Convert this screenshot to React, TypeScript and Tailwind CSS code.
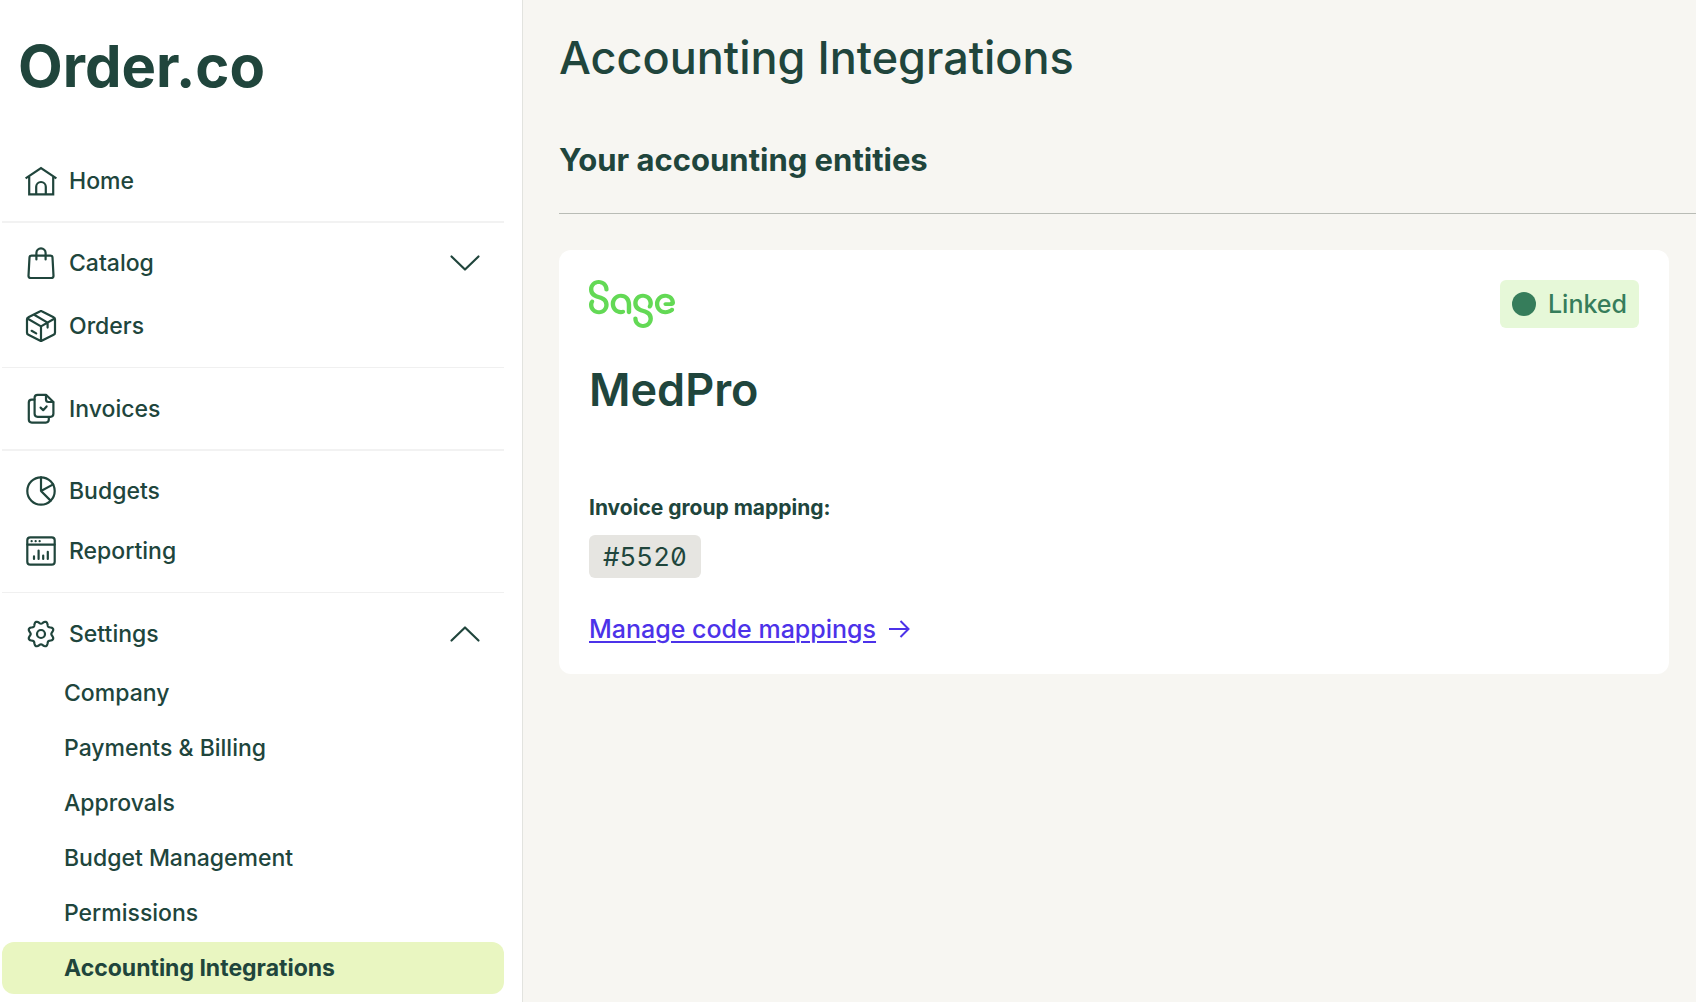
import { useState } from "react";
import type { ReactNode } from "react";
import { SiSage } from "react-icons/si";

const gearPoints = Array.from({ length: 96 }, (_, i) => {
  const a = (i / 96) * Math.PI * 2;
  const r = 11.7 - 1.4 * Math.cos(8 * a);
  return `${(16 + r * Math.cos(a)).toFixed(2)},${(16 + r * Math.sin(a)).toFixed(2)}`;
}).join(" ");

function Icon({ children }: { children: ReactNode }) {
  return (
    <svg
      viewBox="0 0 32 32"
      className="size-8 shrink-0"
      fill="none"
      stroke="currentColor"
      strokeWidth="2.2"
      strokeLinecap="round"
      strokeLinejoin="round"
      aria-hidden="true"
    >
      {children}
    </svg>
  );
}

const icons = {
  home: (
    <Icon>
      <path strokeLinecap="butt" strokeLinejoin="miter" d="M.6 13.4 16 3l15.4 10.4M4.2 11v18.4h24V11" />
      <path d="M11.2 29v-7.2a4.8 4.8 0 0 1 9.6 0V29" />
    </Icon>
  ),
  catalog: (
    <Icon>
      <path d="M6.5 8.6h19a2 2 0 0 1 2 1.9l1 18.4a2 2 0 0 1-2 2.1h-21a2 2 0 0 1-2-2.1l1-18.4a2 2 0 0 1 2-1.9Z" />
      <path d="M11.4 12.5V6a4.6 4.6 0 0 1 9.2 0v6.5" />
    </Icon>
  ),
  orders: (
    <Icon>
      <path d="M17.2 1.4 28.6 7.2a2.4 2.4 0 0 1 1.4 2.2v13.2a2.4 2.4 0 0 1-1.4 2.2l-11.4 5.8a2.4 2.4 0 0 1-2.4 0L3.4 24.8A2.4 2.4 0 0 1 2 22.6V9.4a2.4 2.4 0 0 1 1.4-2.2l11.4-5.8a2.4 2.4 0 0 1 2.4 0Z" />
      <path d="M2.8 8.8 16 16.4l13.2-7.6M16 16.4v14M9.6 5l13 7.6v5M6.6 20.8l4.6 2.6" />
    </Icon>
  ),
  invoices: (
    <Icon>
      <path d="M21 1.8h-8.400a3 3 0 0 0-3 3v16a3 3 0 0 0 3 3h12.800a3 3 0 0 0 3-3V9L21 1.800Z" />
      <path d="M21 2v4.6A2.4 2.4 0 0 0 23.4 9h4.8" />
      <path d="M9.4 6.6H6.8a3 3 0 0 0-3 3v17a3 3 0 0 0 3 3h14a3 3 0 0 0 3-3V24" />
      <path d="m15.6 14.6 2.6 2.6 3.4-3.8" />
    </Icon>
  ),
  budgets: (
    <Icon>
      <circle cx="16" cy="16" r="13.7" />
      <path d="M16 2.4V16l12.2-6.6M16 16l9.6 9.6" />
    </Icon>
  ),
  reporting: (
    <Icon>
      <rect x="2.3" y="2.3" width="27.4" height="27.4" rx="3" />
      <path d="M2.4 9.6h27.2M9 24v-2.6M13.6 24v-8.4M18.2 24v-3.4M22.8 24v-7.2" />
      <path d="M6.6 6.2h.1M10.6 6.2h.1M14.6 6.2h.1" />
    </Icon>
  ),
  settings: (
    <Icon>
      <polygon points={gearPoints} />
      <circle cx="16" cy="16" r="4" />
    </Icon>
  ),
};

function Chevron({ up }: { up?: boolean }) {
  return (
    <Icon>
      <path d={up ? "M2.5 22.5 16 9.5l13.5 13" : "m2.5 9.5 13.5 13 13.5-13"} />
    </Icon>
  );
}

function NavLink({ icon, label }: { icon: ReactNode; label: string }) {
  return (
    <a href="#" className="flex h-14 items-center gap-3 pl-[23px]">
      {icon}
      <span>{label}</span>
    </a>
  );
}

function NavGroup({ icon, label, open, onClick }: { icon: ReactNode; label: string; open: boolean; onClick: () => void }) {
  return (
    <button
      type="button"
      aria-expanded={open}
      onClick={onClick}
      className="flex h-14 w-full items-center gap-3 px-[23px] text-left"
    >
      {icon}
      <span className="flex-1">{label}</span>
      <Chevron up={open} />
    </button>
  );
}

const settingsLinks = [
  "Company",
  "Payments & Billing",
  "Approvals",
  "Budget Management",
  "Permissions",
  "Accounting Integrations",
];

export default function App() {
  const [catalogOpen, setCatalogOpen] = useState(false);
  const [settingsOpen, setSettingsOpen] = useState(true);

  return (
    <div className="flex min-h-screen bg-[#f7f6f2] font-['Inter',sans-serif] text-[#20453c]">
      {/* SIDEBAR */}
      <aside className="w-[523px] shrink-0 border-r border-[#e2e3df] bg-white pl-0.5 pr-[18px]">
        <a href="#" className="block px-4 pt-8 text-[58px] font-bold leading-[68px]">
          Order.co
        </a>

        <nav className="mt-[53px] text-[23px] font-medium leading-8">
          <div className="pb-3">
            <NavLink icon={icons.home} label="Home" />
          </div>
          <div className="flex flex-col gap-[7px] border-t-2 border-[#f2f2f2] pt-3 pb-[13px]">
            <NavGroup icon={icons.catalog} label="Catalog" open={catalogOpen} onClick={() => setCatalogOpen(!catalogOpen)} />
            <NavLink icon={icons.orders} label="Orders" />
          </div>
          <div className="border-t border-[#f0f0f0] pt-[13px] pb-3">
            <NavLink icon={icons.invoices} label="Invoices" />
          </div>
          <div className="flex flex-col gap-1 border-t-2 border-[#f2f2f2] pt-3 pb-[13px]">
            <NavLink icon={icons.budgets} label="Budgets" />
            <NavLink icon={icons.reporting} label="Reporting" />
          </div>
          <div className="border-t border-[#f0f0f0] pt-[13px]">
            <NavGroup icon={icons.settings} label="Settings" open={settingsOpen} onClick={() => setSettingsOpen(!settingsOpen)} />
            {settingsOpen && (
              <ul className="mt-[5px] flex flex-col gap-[3px]">
                {settingsLinks.map((label) => (
                  <li key={label}>
                    <a
                      href="#"
                      className={
                        label === "Accounting Integrations"
                          ? "flex h-[52px] items-center rounded-xl bg-[#e9f6c1] pl-[62px] font-bold"
                          : "flex h-[52px] items-center pl-[62px]"
                      }
                    >
                      {label}
                    </a>
                  </li>
                ))}
              </ul>
            )}
          </div>
        </nav>
      </aside>

      {/* CONTENT */}
      <main className="min-w-0 flex-1 pl-9">
        <h1 className="pt-7 text-[45px] font-medium leading-[60px]">Accounting Integrations</h1>
        <div className="mt-[46px] border-b border-[#b9bcb6] pb-7">
          <h2 className="text-[31px] font-bold leading-[51px]">Your accounting entities</h2>
        </div>

        <section className="mt-9 mr-[27px] rounded-xl bg-white p-[30px]">
          <div className="flex items-start justify-between">
            <div className="flex h-12 w-[86px] items-center justify-center overflow-hidden text-[#63d955]">
              <SiSage className="size-[86px] shrink-0" title="Sage" />
            </div>
            <span className="flex h-12 items-center gap-3 rounded-md bg-[#e6f8d8] px-3 text-[25px] font-medium leading-8 text-[#367d5b]">
              <span className="size-6 rounded-full bg-[#367d5b]" />
              Linked
            </span>
          </div>

          <h3 className="mt-8 text-[45px] font-semibold leading-[60px]">MedPro</h3>

          <p className="mt-[72px] text-[21px] font-bold leading-8">Invoice group mapping:</p>
          <span className="mt-[11px] flex h-[43px] w-fit items-center rounded-md bg-[#e6e5e1] px-3.5 text-[26px] leading-8 tabular-nums slashed-zero">
            #5520
          </span>

          <a href="#" className="mt-9 flex w-fit items-center gap-2.5 text-[25px] font-medium leading-[30px] text-[#4c32e9]">
            <span className="underline decoration-2 underline-offset-3">Manage code mappings</span>
            <svg viewBox="0 0 24 24" className="size-6" fill="none" stroke="currentColor" strokeWidth="2" aria-hidden="true">
              <path d="M3 12h19.5M14.5 4l8 8-8 8" />
            </svg>
          </a>
        </section>
      </main>
    </div>
  );
}
